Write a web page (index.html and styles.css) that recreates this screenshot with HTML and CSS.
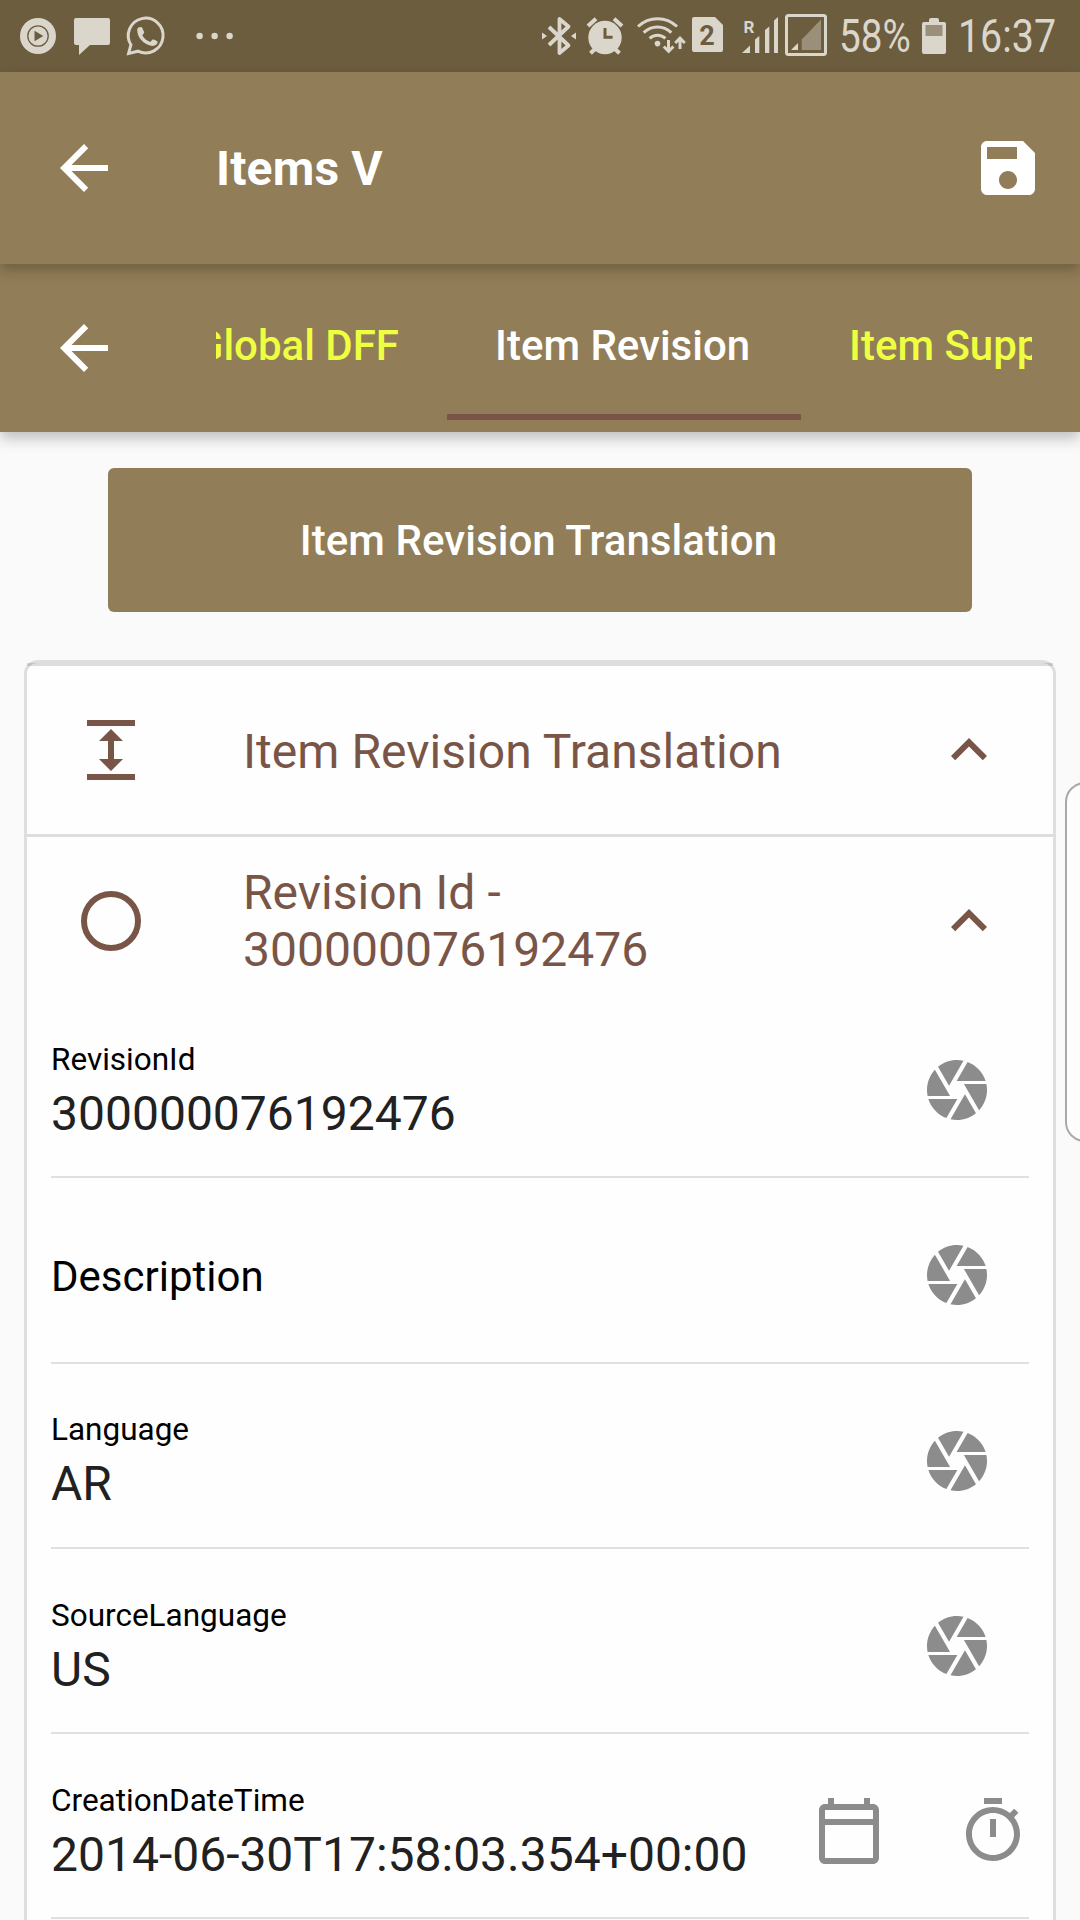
FILE: index.html
```html
<!DOCTYPE html>
<html lang="en">
<head>
<meta charset="utf-8">
<title>Items V</title>
<link rel="stylesheet" href="styles.css">
</head>
<body>
<svg class="defs" aria-hidden="true">
  <symbol id="back" viewBox="0 0 24 24"><path d="M20 11H7.83l5.59-5.59L12 4l-8 8 8 8 1.41-1.41L7.83 13H20v-2z"/></symbol>
  <symbol id="less" viewBox="0 0 24 24"><path d="M12 8l-6 6 1.41 1.41L12 10.83l4.59 4.58L18 14z"/></symbol>
  <symbol id="camera" viewBox="0 0 24 24"><path d="M9.4 10.5l4.77-8.26C13.47 2.09 12.75 2 12 2c-2.4 0-4.6.85-6.32 2.25l3.66 6.35.06-.1zM21.54 9c-.92-2.92-3.15-5.26-6-6.34L11.88 9h9.66zm.26 1h-7.49l.29.5 4.76 8.25C21 16.97 22 14.61 22 12c0-.69-.07-1.35-.2-2zM8.54 12l-3.9-6.75C3.01 7.03 2 9.39 2 12c0 .69.07 1.35.2 2h7.49l-1.15-2zm-6.08 3c.92 2.92 3.15 5.26 6 6.34L12.12 15H2.46zm11.27 0l-3.9 6.76c.7.15 1.42.24 2.17.24 2.4 0 4.6-.85 6.32-2.25l-3.66-6.35-.93 1.6z"/></symbol>
</svg>
<div class="screen">
  <div class="status">
    <svg class="notifications" viewBox="0 0 240 72">
      <circle cx="38" cy="36" r="18"/>
      <circle class="cut-line" cx="38" cy="36" r="10.2"/>
      <path class="cut" d="M34.5 30.7v10.6l8.8-5.3z"/>
      <path d="M76 18h32q2 0 2 2v23q0 2-2 2H90L79 55V45h-3q-2 0-2-2V20q0-2 2-2z"/>
      <path class="line" d="M128.6 53.4l2.3-8.6A17.4 17.4 0 1 1 138 51.2z"/>
      <path d="M137.2 29.2c.8-2.2 4.2-3 5.1-1.1l1.8 4c.4 1.2-1.4 2.6-1.8 3.2 1.6 3.2 4.6 5.6 7.9 6.6l2.4-2.4c1-.6 4.8 1.6 5 2.3.3 2.4-2.8 4.2-5.3 4.1-8.2-.9-15.5-8.5-15.1-16.7z"/>
      <circle cx="199.6" cy="36" r="3.2"/><circle cx="214.6" cy="36" r="3.2"/><circle cx="229.6" cy="36" r="3.2"/>
    </svg>
    <svg class="system" viewBox="530 0 304 72">
      <path class="line bluetooth" d="M549 27l19.500 18.500-9 7.500V19l9 7.500L549 45"/>
      <path d="M542 32.5l5 3.5-5 3.5zM576 32.5l-5 3.5 5 3.5z"/>
      <circle cx="605" cy="37.5" r="16.7"/>
      <path class="ear" d="M588 26l8-7.3M622 26l-8-7.3M596.5 47.5l-6 5.8M613.5 47.5l6 5.8"/>
      <path class="hands" d="M605 28v9.3h7.6"/>
      <g class="line">
        <path d="M638 26.5C649 16 666 16 677 26.5"/>
        <path d="M643.7 32.6C651.5 25 663.5 25 671.3 32.6"/>
        <path d="M649.6 38.4C654 34.2 661 34.2 665.4 38.4"/>
        <path d="M668.5 40v11M663.8 46.5l4.8 4.8 4.8-4.8M680 49V38.5M675.2 43l4.8-4.8 4.8 4.8"/>
      </g>
      <circle cx="657.5" cy="43.6" r="2.8"/>
      <path d="M694 17h21l8 8v25q0 2-2 2h-27q-2 0-2-2V19q0-2 2-2z"/>
      <text class="sim" x="707" y="45">2</text>
      <text class="roam" x="749" y="32.5">R</text>
      <path d="M742 53l8-7.5V53zM755 53V39.5l4.3-3.5V53zM765 53V30l4.3-3.5V53zM774 53V20.5l4-3.5V53z"/>
      <rect class="line" x="786.5" y="15.5" width="39" height="39" rx="2"/>
      <path d="M791 50l7-7v7z"/>
      <path class="dim" d="M801.7 50V39.5L821 19.500V50z"/>
    </svg>
    <span class="percent"><span>58%</span></span>
    <svg class="battery" viewBox="0 0 24 36">
      <path d="M2 4h5V2q0-2 2-2h6q2 0 2 2v2h5q2 0 2 2v28q0 2-2 2H2q-2 0-2-2V6q0-2 2-2z"/>
      <rect class="level" x="3.5" y="7" width="17" height="11"/>
    </svg>
    <span class="clock"><span>16:37</span></span>
  </div>

  <header class="appbar">
    <svg class="icon"><use href="#back"/></svg>
    <h1>Items V</h1>
    <svg class="icon" viewBox="0 0 24 24"><path d="M17 3H5c-1.11 0-2 .9-2 2v14c0 1.1.89 2 2 2h14c1.1 0 2-.9 2-2V7l-4-4zm-5 16c-1.66 0-3-1.34-3-3s1.34-3 3-3 3 1.34 3 3-1.34 3-3 3zm3-10H5V5h10v4z"/></svg>
  </header>

  <nav class="tabbar">
    <svg class="icon"><use href="#back"/></svg>
    <div class="tabs">
      <div class="tab previous">Global DFF</div>
      <div class="tab active">Item Revision</div>
      <div class="tab">Item Supp</div>
    </div>
  </nav>

  <main>
    <button class="action">Item Revision Translation</button>
    <section class="card">
      <div class="tile header">
        <svg class="icon" viewBox="0 0 24 24"><path d="M4 20h16v2H4zM4 2h16v2H4zM13 9h3l-4-4-4 4h3v6H8l4 4 4-4h-3z"/></svg>
        <h2>Item Revision Translation</h2>
        <svg class="icon"><use href="#less"/></svg>
      </div>
      <div class="tile record">
        <svg class="icon" viewBox="0 0 24 24"><circle class="ring" cx="12" cy="12" r="9"/></svg>
        <h2>Revision Id -<br>300000076192476</h2>
        <svg class="icon"><use href="#less"/></svg>
      </div>
      <div class="fields">
        <div class="field">
          <div class="entry"><label>RevisionId</label><span>300000076192476</span></div>
          <svg class="icon"><use href="#camera"/></svg>
        </div>
        <div class="field">
          <div class="entry empty"><label>Description</label></div>
          <svg class="icon"><use href="#camera"/></svg>
        </div>
        <div class="field">
          <div class="entry"><label>Language</label><span>AR</span></div>
          <svg class="icon"><use href="#camera"/></svg>
        </div>
        <div class="field">
          <div class="entry"><label>SourceLanguage</label><span>US</span></div>
          <svg class="icon"><use href="#camera"/></svg>
        </div>
        <div class="field datetime">
          <div class="entry"><label>CreationDateTime</label><span>2014-06-30T17:58:03.354+00:00</span></div>
          <svg class="icon" viewBox="0 0 24 24"><path d="M20 3h-1V1h-2v2H7V1H5v2H4c-1.1 0-2 .9-2 2v16c0 1.1.9 2 2 2h16c1.1 0 2-.9 2-2V5c0-1.1-.9-2-2-2zm0 18H4V10h16v11zm0-13H4V5h16v3z"/></svg>
          <svg class="icon" viewBox="0 0 24 24"><path d="M15 1H9v2h6V1zm-4 13h2V8h-2v6zm8.03-6.61l1.42-1.42c-.43-.51-.9-.99-1.41-1.41l-1.42 1.42C16.07 4.74 14.12 4 12 4c-4.97 0-9 4.03-9 9s4.02 9 9 9 9-4.03 9-9c0-2.12-.74-4.07-1.97-5.61zM12 20c-3.87 0-7-3.13-7-7s3.13-7 7-7 7 3.13 7 7-3.13 7-7 7z"/></svg>
        </div>
      </div>
    </section>
  </main>
  <div class="edge-handle"></div>
</div>
</body>
</html>
```
FILE: styles.css
```css
* { box-sizing: border-box; }

body {
  margin: 0;
  font-family: Roboto, "Liberation Sans", sans-serif;
  background: #fafafa;
}

.defs { display: none; }

.screen {
  position: relative;
  width: 1080px;
  height: 1920px;
  overflow: hidden;
  display: flex;
  flex-direction: column;
}

h1, h2 { margin: 0; }

.icon {
  width: 72px;
  height: 72px;
  flex: none;
  fill: currentColor;
}

/* System status bar */
.status {
  display: flex;
  align-items: center;
  height: 72px;
  flex: none;
  background: #6c5d3f;
  color: #dbd6cc;
  fill: #dbd6cc;
}
.notifications { width: 240px; height: 72px; }
.system { width: 304px; height: 72px; margin-left: 290px; }
.status .line { fill: none; stroke: #dbd6cc; stroke-width: 3; }
.status .bluetooth { stroke-width: 3.8; stroke-linejoin: round; }
.status .ear { fill: none; stroke: #dbd6cc; stroke-width: 4; }
.status .cut { fill: #6c5d3f; }
.status .cut-line { fill: none; stroke: #6c5d3f; stroke-width: 1.3; }
.status .hands { fill: none; stroke: #6c5d3f; stroke-width: 3; }
.status .dim, .status .level { fill: #9a8f79; }
.sim { font-size: 27px; font-weight: 700; text-anchor: middle; fill: #6c5d3f; }
.roam { font-size: 17px; font-weight: 700; text-anchor: middle; }
.percent, .clock { font-size: 45.5px; line-height: 72px; padding-top: 2px; }
.percent { width: 71px; margin-left: 5px; }
.clock { width: 100px; margin-left: 12px; }
.percent span, .clock span {
  display: inline-block;
  transform: scaleX(.85);
  transform-origin: 0 50%;
}
.clock span { transform: scaleX(.865); }
.battery { width: 24px; height: 36px; margin-left: 12px; }

/* App bar */
.appbar {
  display: flex;
  align-items: center;
  height: 192px;
  flex: none;
  padding: 0 36px 0 48px;
  background: #917d57;
  color: #fff;
  box-shadow: 0 6px 12px rgba(0, 0, 0, .24);
  z-index: 2;
}
.appbar h1 {
  flex: 1;
  margin-left: 96px;
  font-size: 48px;
  font-weight: 700;
  letter-spacing: .15px;
}

.tabbar {
  display: flex;
  align-items: center;
  height: 168px;
  flex: none;
  padding: 0 48px;
  background: #917d57;
  color: #fff;
  box-shadow: 0 6px 14px rgba(0, 0, 0, .25);
  z-index: 1;
}
.tabs {
  display: flex;
  flex: 1;
  height: 144px;
  margin-left: 96px;
  overflow: hidden;
}
.tab {
  display: flex;
  flex: none;
  height: 144px;
  padding: 0 48px 6px;
  align-items: center;
  font-size: 42px;
  font-weight: 500;
  white-space: nowrap;
  color: #eeff41;
}
.tab.previous { width: 231px; justify-content: flex-end; }
.tab.active {
  width: 354px;
  padding-bottom: 0;
  color: #fff;
  border-bottom: 6px solid #795548;
}

/* Page content */
main {
  display: flex;
  flex-direction: column;
  align-items: center;
  padding: 36px 24px 0;
}
.action {
  width: 864px;
  height: 144px;
  padding: 0 3px 0 0;
  border: 0;
  border-radius: 6px;
  background: #917d57;
  color: #fff;
  font: 500 42px Roboto, sans-serif;
  letter-spacing: .07px;
}
.card {
  width: 1032px;
  height: 1300px;
  margin-top: 48px;
  border: 3px solid #dedede;
  border-radius: 14px;
  background: #fefefe;
}
.tile {
  display: flex;
  align-items: center;
  padding: 0 48px;
  color: #795548;
}
.tile h2 {
  flex: 1;
  margin-left: 96px;
  font-size: 48px;
  font-weight: 400;
  line-height: 57px;
  letter-spacing: .04px;
}
.header {
  height: 174px;
  border-top: 3px solid rgba(0, 0, 0, .13);
  border-bottom: 3px solid #dedede;
}
.header h2 { padding-top: 2px; }
.record { height: 156px; padding-top: 12px; }
.ring { fill: none; stroke: currentColor; stroke-width: 2; }

.fields { padding: 0 24px; }
.field {
  display: flex;
  align-items: center;
  height: 185.25px;
  padding: 11px 36px 0 0;
  border-bottom: 2px solid #dee1e3;
  color: #8c8c8c;
}
.field.datetime { padding-right: 0; gap: 72px; }
.entry {
  display: flex;
  flex: 1;
  min-width: 0;
  flex-direction: column;
  gap: 8px;
  padding-top: 2.5px;
  white-space: nowrap;
}
.entry label { font-size: 31.5px; line-height: 37px; color: #000; }
.entry span { font-size: 48px; line-height: 56px; color: #212121; }
.entry.empty label { font-size: 42px; line-height: 50px; }

/* Edge panel handle over the right side of the screen */
.edge-handle {
  position: absolute;
  top: 782px;
  left: 1065px;
  width: 40px;
  height: 360px;
  border: 2px solid #a9a9a9;
  border-radius: 20px;
  background: #fdfdfd;
}
```
